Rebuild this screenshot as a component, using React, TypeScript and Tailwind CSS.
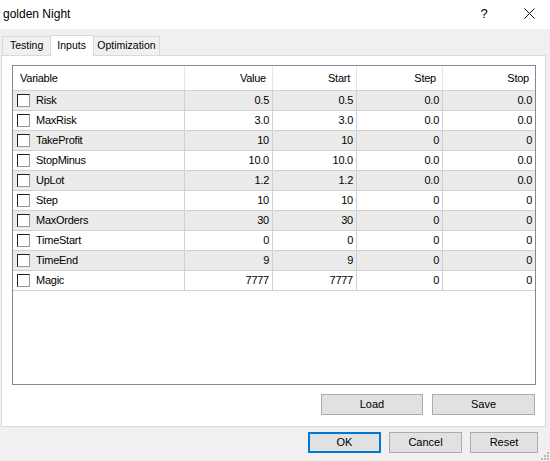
const rows = [
  { name: "Risk", value: "0.5", start: "0.5", step: "0.0", stop: "0.0" },
  { name: "MaxRisk", value: "3.0", start: "3.0", step: "0.0", stop: "0.0" },
  { name: "TakeProfit", value: "10", start: "10", step: "0", stop: "0" },
  { name: "StopMinus", value: "10.0", start: "10.0", step: "0.0", stop: "0.0" },
  { name: "UpLot", value: "1.2", start: "1.2", step: "0.0", stop: "0.0" },
  { name: "Step", value: "10", start: "10", step: "0", stop: "0" },
  { name: "MaxOrders", value: "30", start: "30", step: "0", stop: "0" },
  { name: "TimeStart", value: "0", start: "0", step: "0", stop: "0" },
  { name: "TimeEnd", value: "9", start: "9", step: "0", stop: "0" },
  { name: "Magic", value: "7777", start: "7777", step: "0", stop: "0" },
];

function Checkbox() {
  return (
    <div className="w-[13px] h-[13px] bg-white border border-t-[#222] border-l-[#222] border-b-[#999] border-r-[#999] shrink-0" />
  );
}

function Btn({ label, w, primary }: { label: string; w: string; primary?: boolean }) {
  return (
    <button
      className={`${w} h-[21px] bg-[#e1e1e1] text-[11px] text-black flex items-center justify-center ${
        primary ? "border-2 border-[#0078d7]" : "border border-[#adadad]"
      }`}
    >
      {label}
    </button>
  );
}

export default function App() {
  return (
    <div
      className="w-[550px] h-[461px] bg-[#f0f0f0] flex flex-col relative overflow-hidden text-black"
      style={{ fontFamily: '"Liberation Sans", Arial, sans-serif' }}
    >
      {/* Title bar */}
      <div className="h-[29px] bg-white flex items-center justify-between shrink-0">
        <span className="pl-[3px] text-[12px] -mt-[2px]">golden Night</span>
        <div className="flex items-center -mt-[2px]">
          <span className="text-[13px] w-[10px] text-center mr-[35px]">?</span>
          <svg width="11" height="11" viewBox="0 0 11 11" className="mr-[15px]">
            <path d="M0.5 0.5 L10.5 10.5 M10.5 0.5 L0.5 10.5" stroke="#111" strokeWidth="1" />
          </svg>
        </div>
      </div>

      {/* Tabs */}
      <div className="flex items-end h-[27px] pl-[2px] shrink-0 relative z-10">
        <div className="h-[19px] px-[7px] border border-b-0 border-[#d9d9d9] bg-[#f0f0f0] text-[10.5px] flex items-center mb-px">
          Testing
        </div>
        <div className="h-[21px] w-[44px] pl-[6px] border border-b-0 border-[#d9d9d9] bg-white text-[10.5px] flex items-start pt-[2px] -mx-px">
          Inputs
        </div>
        <div className="h-[19px] px-[3px] border border-b-0 border-[#d9d9d9] bg-[#f0f0f0] text-[10.5px] flex items-center mb-px">
          Optimization
        </div>
      </div>

      {/* Panel */}
      <div className="ml-px w-[545px] h-[372px] -mt-px bg-white border border-[#d9d9d9] flex flex-col pl-[10px] pr-[9px] pt-[9px]">
        <div className="w-[524px] h-[320px] border border-[#828790] bg-white flex flex-col">
          <div className="grid grid-cols-[172px_88px_84px_86px_1fr] h-[24px] text-[11px] tracking-[-0.25px]">
            <div className="flex items-center pl-[7px] border-r border-[#e5e5e5]">Variable</div>
            <div className="flex items-center justify-end pr-[6px] border-r border-[#e5e5e5]">Value</div>
            <div className="flex items-center justify-end pr-[6px] border-r border-[#e5e5e5]">Start</div>
            <div className="flex items-center justify-end pr-[6px] border-r border-[#e5e5e5]">Step</div>
            <div className="flex items-center justify-end pr-[6px]">Stop</div>
          </div>
          {rows.map((r, i) => (
            <div
              key={r.name}
              className={`grid grid-cols-[172px_88px_84px_86px_1fr] h-[20px] text-[11px] tracking-[-0.25px] ${
                i % 2 === 0 ? "bg-[#ebebeb]" : "bg-white"
              }`}
            >
              <div className="flex items-center gap-[6px] pl-[4px] border-t border-r border-[#d0d0d0]">
                <Checkbox />
                <span>{r.name}</span>
              </div>
              <div className="flex items-center justify-end pr-[3px] border-t border-r border-[#d0d0d0]">{r.value}</div>
              <div className="flex items-center justify-end pr-[3px] border-t border-r border-[#d0d0d0]">{r.start}</div>
              <div className="flex items-center justify-end pr-[3px] border-t border-r border-[#d0d0d0]">{r.step}</div>
              <div className="flex items-center justify-end pr-[3px] border-t border-[#d0d0d0]">{r.stop}</div>
            </div>
          ))}
          <div className="h-px bg-[#d0d0d0] w-full" />
        </div>
        <div className="flex justify-end gap-[9px] mt-[9px] pr-px">
          <Btn label="Load" w="w-[102px]" />
          <Btn label="Save" w="w-[103px]" />
        </div>
      </div>

      {/* Bottom buttons */}
      <div className="flex justify-end gap-[8px] pr-[12px] mt-[5px]">
        <Btn label="OK" w="w-[73px]" primary />
        <Btn label="Cancel" w="w-[73px]" />
        <Btn label="Reset" w="w-[68px]" />
      </div>

      {/* Size grip */}
      <svg width="10" height="10" viewBox="0 0 10 10" className="absolute right-0 bottom-0">
        <rect x="7" y="1" width="2" height="2" fill="#b8b8b8" />
        <rect x="4" y="4" width="2" height="2" fill="#b8b8b8" />
        <rect x="7" y="4" width="2" height="2" fill="#b8b8b8" />
        <rect x="1" y="7" width="2" height="2" fill="#b8b8b8" />
        <rect x="4" y="7" width="2" height="2" fill="#b8b8b8" />
        <rect x="7" y="7" width="2" height="2" fill="#b8b8b8" />
      </svg>
    </div>
  );
}
